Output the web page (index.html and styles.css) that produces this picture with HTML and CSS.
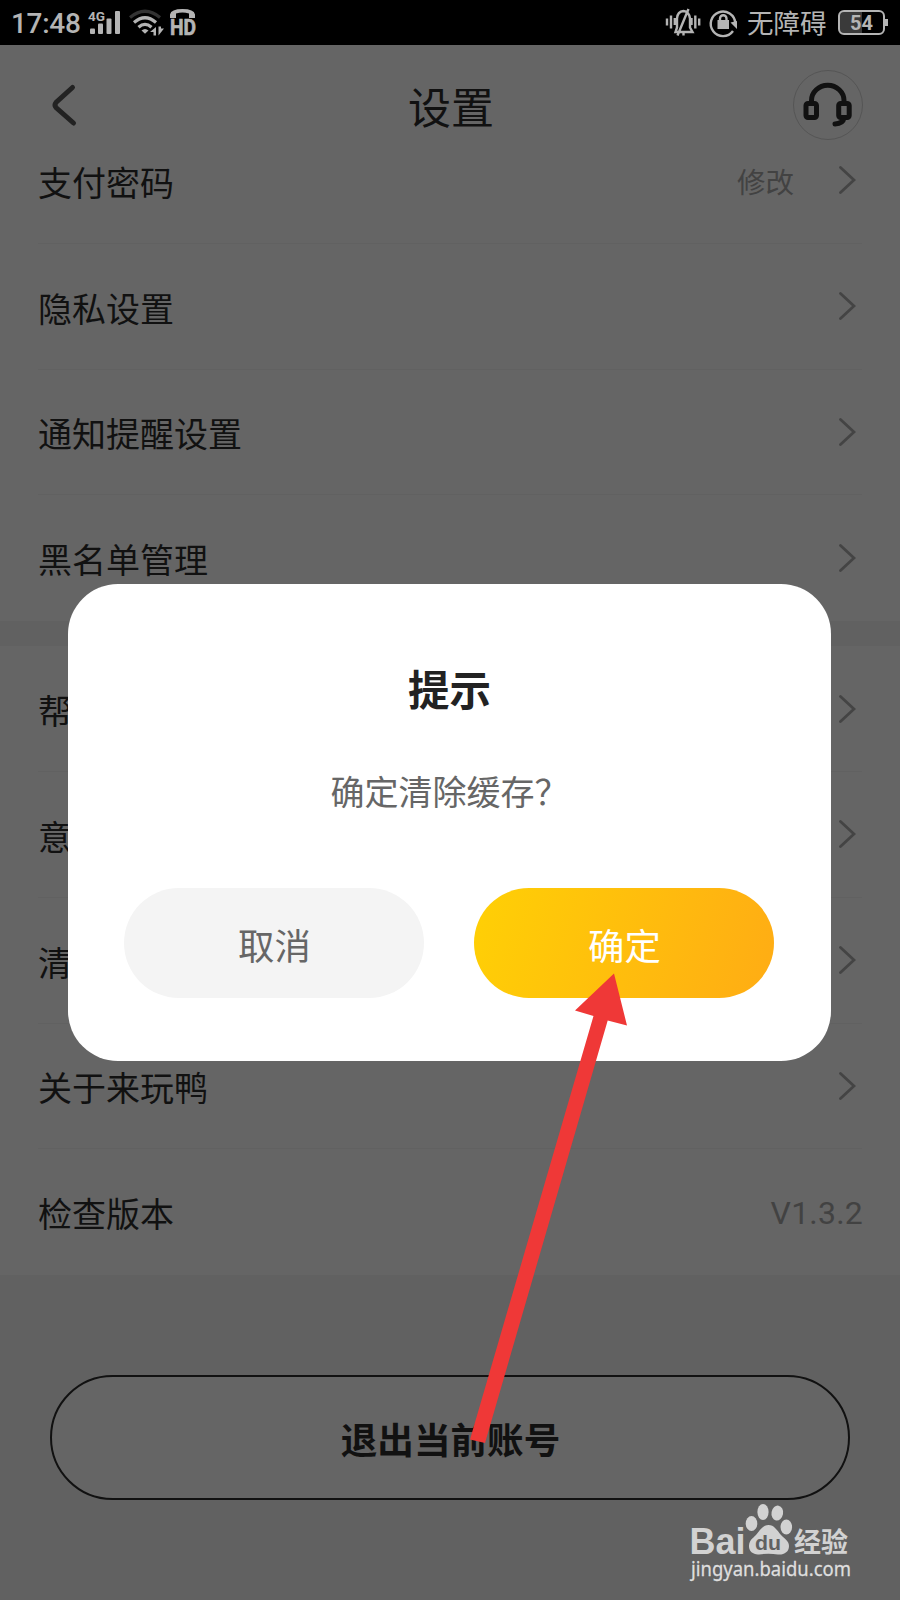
FILE: index.html
```html
<!DOCTYPE html>
<html lang="zh-CN">
<head>
<meta charset="utf-8">
<title>设置</title>
<link rel="stylesheet" href="styles.css">
</head>
<body>
<svg class="defs" width="0" height="0" aria-hidden="true">
  <symbol id="chevron" viewBox="0 0 18 30"><path d="M2.500 2.500 16 15 2.500 27.500"/></symbol>
</svg>
<div class="screen">
  <header class="status">
    <div class="status-left">
      <span class="time">17:48</span>
      <svg class="status-icons" width="112" height="45" viewBox="86 0 112 45">
        <text class="net" x="88" y="20.500" textLength="17" lengthAdjust="spacingAndGlyphs">4G</text>
        <rect x="90" y="28.500" width="5" height="5.500" rx="1"/>
        <rect x="98" y="23.500" width="5" height="10.500" rx="1"/>
        <rect x="106.500" y="18.500" width="5" height="15.500" rx="1"/>
        <rect x="115" y="11" width="5" height="23" rx="1"/>
        <g class="wifi">
          <path class="dim" d="M130 17.500Q145 5 160 17.500"/>
          <path d="M134 22.500Q145 13 156 22.500M138.500 27.300Q145 21.500 151.500 27.300"/>
        </g>
        <path d="M141.500 30.500Q145 27.500 148.500 30.500L145 33.800ZM156 27v8.500h-2.500v-3.500h-3.500zM158.500 26.500v9l5.500-7h-3v-2z"/>
        <path d="M170 18v-3.500Q171 9 182.500 9T195 14.500V18h-6v-4.500Q182.500 11.500 176 13.500V18Z"/>
        <text class="hd" x="170" y="34.500" textLength="26" lengthAdjust="spacingAndGlyphs">HD</text>
      </svg>
    </div>
    <div class="status-right">
      <svg class="status-icons" width="74" height="45" viewBox="665 0 74 45">
        <path class="line" d="M667 18.500v7M671 15.500v13M674.800 18v7M691.500 18v7M695.300 15.500v13M699.200 18.500v7"/>
        <path class="line" d="M675.500 32h17l-2.500-4.500v-9q-1-7-6.500-7.500-6 .5-6.500 7.500v9zM688.500 9 677.500 35.500M683.500 32v3.500"/>
        <path class="line" d="M733 31A12.300 12.300 0 1 1 735.300 23"/>
        <path d="M730.500 22.500 737 21v8zM717.500 20h11.500v9h-11.500z"/>
        <path class="line" d="M720 21v-2.500a3.200 3.200 0 0 1 6.500 0V21"/>
      </svg>
      <span class="mode">无障碍</span>
      <div class="battery"><span>54</span></div>
      <i class="battery-tip"></i>
    </div>
  </header>

  <nav class="titlebar">
    <svg class="back" width="28" height="44" viewBox="0 0 28 44"><path d="M22.500 4.500 6 19.500Q4 22 6 24.500L23.500 40"/></svg>
    <h1>设置</h1>
    <div class="service">
      <svg width="50" height="50" viewBox="803 79 50 50">
        <path d="M811.500 101.500v-2a16 15 0 0 1 32.500 0v2"/>
        <rect x="806" y="102.500" width="10.500" height="14" rx="2"/>
        <rect x="838.700" y="102.500" width="10.500" height="14" rx="2"/>
        <path d="M844 117q-1 5.500-9 6"/>
      </svg>
    </div>
  </nav>

  <main>
    <section class="group">
      <div class="row"><span>支付密码</span><em>修改</em><svg class="chev"><use href="#chevron"/></svg></div>
      <div class="row"><span>隐私设置</span><svg class="chev"><use href="#chevron"/></svg></div>
      <div class="row"><span>通知提醒设置</span><svg class="chev"><use href="#chevron"/></svg></div>
      <div class="row last"><span>黑名单管理</span><svg class="chev"><use href="#chevron"/></svg></div>
    </section>
    <section class="group">
      <div class="row"><span>帮助中心</span><svg class="chev"><use href="#chevron"/></svg></div>
      <div class="row"><span>意见反馈</span><svg class="chev"><use href="#chevron"/></svg></div>
      <div class="row"><span>清除缓存</span><svg class="chev"><use href="#chevron"/></svg></div>
      <div class="row"><span>关于来玩鸭</span><svg class="chev"><use href="#chevron"/></svg></div>
      <div class="row last"><span>检查版本</span><em class="version">V1.3.2</em></div>
    </section>
    <button class="logout">退出当前账号</button>
  </main>

  <div class="dialog">
    <h2>提示</h2>
    <p>确定清除缓存？</p>
    <div class="actions">
      <button class="cancel">取消</button>
      <button class="ok">确定</button>
    </div>
  </div>

  <svg class="annotations" width="900" height="1600" viewBox="0 0 900 1600">
    <path class="arrow" d="M614 973.500 627 1025.500 607.700 1020.500 485 1443 470 1439.500 593.500 1016 575 1010.500Z"/>
    <g class="brand">
      <text class="bai" x="689.500" y="1553.500" textLength="56" lengthAdjust="spacingAndGlyphs">Bai</text>
      <ellipse cx="751.500" cy="1523.500" rx="5.800" ry="7.500"/>
      <ellipse cx="763" cy="1512" rx="5.600" ry="8"/>
      <ellipse cx="777.300" cy="1513" rx="5.800" ry="7.500" transform="rotate(10 777 1513)"/>
      <ellipse cx="786.300" cy="1527" rx="5.800" ry="7.500"/>
      <path d="M768.500 1525C774 1525 777 1530 781 1535C785 1539 789 1541 789 1546C789 1552 784 1555 778 1554.500Q768.500 1553 759 1554.500C753 1555 748.500 1551 749 1545.500C749.500 1540 753 1538 756 1535C760 1530 763 1525 768.500 1525Z"/>
      <text class="du" x="755" y="1549.500" textLength="26" lengthAdjust="spacingAndGlyphs">du</text>
      <text class="jy" x="794" y="1551.500" textLength="54" lengthAdjust="spacingAndGlyphs">经验</text>
      <text class="url" x="691" y="1575.500" textLength="160" lengthAdjust="spacingAndGlyphs">jingyan.baidu.com</text>
    </g>
  </svg>
</div>
</body>
</html>
```
FILE: styles.css
```css
* { box-sizing: border-box; }
body {
  margin: 0;
  font-family: Roboto, "Noto Sans CJK SC", sans-serif;
  color: #111;
}
h1, h2, p { margin: 0; font-weight: 400; }
em { font-style: normal; }
button { border: 0; padding: 0; font-family: inherit; }
.defs { position: absolute; }

.screen {
  position: relative;
  width: 900px;
  height: 1600px;
  overflow: hidden;
  background: #616161;
}

/* Status bar */
.status {
  display: flex;
  justify-content: space-between;
  height: 45px;
  background: #000;
  color: #b4b4b4;
}
.status-left, .status-right { display: flex; align-items: center; }
.status-left { padding-left: 11px; }
.status-right { padding-right: 12px; }
.time { width: 75px; font-size: 28px; font-weight: 500; line-height: 45px; padding-top: 2px; letter-spacing: -0.300px; }
.status-icons { overflow: visible; fill: #b4b4b4; }
.net { font: 700 12.500px Roboto, sans-serif; }
.hd { font: 700 22px Roboto, sans-serif; stroke: #b4b4b4; stroke-width: 0.700; }
.wifi path { fill: none; stroke: #b4b4b4; stroke-width: 3.200; }
.wifi .dim { stroke: #333; }
.line { fill: none; stroke: #b4b4b4; stroke-width: 2.400; }
.mode { width: 90px; padding-left: 8px; font-size: 26.500px; line-height: 45px; white-space: nowrap; padding-top: 1px; }
.battery {
  width: 47px;
  height: 25px;
  margin-left: 9px;
  border: 2px solid #b4b4b4;
  border-radius: 6px;
  background: linear-gradient(90deg, #3a3a3a 52%, #000 52%);
  font-size: 20px;
  font-weight: 700;
  line-height: 23px;
  text-align: center;
}
.battery-tip { width: 3px; height: 7px; background: #b4b4b4; }

/* Title bar */
.titlebar {
  display: flex;
  align-items: center;
  justify-content: space-between;
  height: 73px;
  padding: 47px 37px 0 50px;
  background: #656565;
}
.titlebar > * { flex: none; }
.back { margin-right: 31px; fill: none; stroke: #222; stroke-width: 5; stroke-linecap: round; }
h1 { padding-top: 8px; font-size: 43px; line-height: 60px; }
.service {
  display: flex;
  align-items: center;
  justify-content: center;
  width: 70px;
  height: 70px;
  border: 1px solid #555;
  border-radius: 50%;
}
.service svg { flex: none; fill: none; stroke: #111; stroke-width: 5; stroke-linecap: round; }

/* Settings rows */
.group { background: #656565; }
.group + .group { margin-top: 25px; }
.row {
  display: flex;
  align-items: center;
  height: 125.800px;
  margin: 0 38px;
  border-bottom: 1px solid #616161;
  font-size: 34px;
}
.row.last { border-bottom-color: transparent; }
.row span { flex: 1; padding-top: 2px; }
.row em { margin-right: 44px; padding-top: 1px; font-size: 28.500px; color: #424242; }
.row .version { margin-right: -1px; padding-top: 3px; font-size: 32px; letter-spacing: 0.200px; }
.chev { width: 18px; height: 30px; margin-right: 6px; fill: none; stroke: #444; stroke-width: 2.800; stroke-linecap: round; }

.logout {
  display: block;
  width: 800px;
  height: 125px;
  margin: 100px auto 0;
  padding: 2px 0 0 1px;
  border: 2px solid #111;
  border-radius: 63px;
  background: #656565;
  color: #111;
  font-size: 36.600px;
  font-weight: 700;
}

/* Confirmation dialog */
.dialog {
  position: absolute;
  left: 68px;
  top: 584px;
  width: 763px;
  height: 477px;
  padding: 78px 57px 0 56px;
  border-radius: 50px;
  background: #fff;
  text-align: center;
}
h2 { padding-left: 1px; font-size: 41.500px; font-weight: 700; line-height: 60px; color: #222; }
.dialog p { margin-top: 46px; padding-left: 1px; font-size: 34px; line-height: 50px; color: #666; }
.actions { display: flex; justify-content: space-between; margin-top: 70px; }
.actions button { width: 300px; height: 110px; padding: 1px 0 0 1px; border-radius: 55px; font-size: 36.400px; }
.cancel { background: #f4f4f4; color: #666; }
.ok { background: linear-gradient(106deg, #ffd005, #ffac14); color: #fff; }

/* Guide arrow and watermark */
.annotations { position: absolute; left: 0; top: 0; pointer-events: none; }
.arrow { fill: #ef3837; }
.brand { fill: #d2d2d2; }
.bai { font: 700 36px "Liberation Sans", sans-serif; }
.du { font: 700 21px "Liberation Sans", sans-serif; fill: #616161; }
.jy { font: 700 27px "Noto Sans CJK SC", sans-serif; }
.url { font: 400 19.500px "Noto Sans", sans-serif; fill: #dedede; stroke: #dedede; stroke-width: 0.300; }
```
